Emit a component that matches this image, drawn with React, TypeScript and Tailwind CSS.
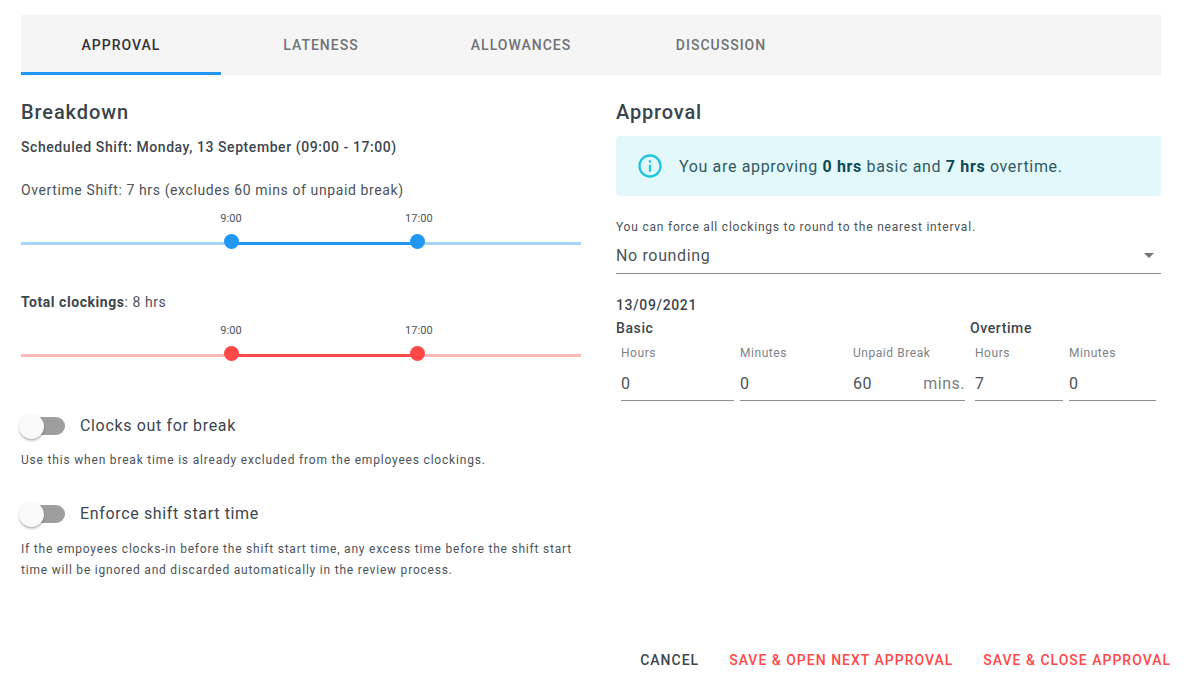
import React from "react";

function Range({ light, dark }: { light: string; dark: string }) {
  return (
    <div className="relative h-[40px] w-[560px]">
      <div className="flex h-[18px] text-[11px] leading-[18px] tracking-[0.1px] text-[#4b5359]">
        <span className="ml-[199px] w-[22px] text-center">9:00</span>
        <span className="ml-[163px] w-[26px] text-center">17:00</span>
      </div>
      <div className="mt-[14px] flex h-[3px] items-stretch">
        <div className={`w-[210px] ${light}`} />
        <div className={`w-[186px] ${dark}`} />
        <div className={`flex-1 ${light}`} />
      </div>
      <div className={`absolute left-[203px] top-[24px] h-[15px] w-[15px] rounded-full ${dark}`} />
      <div className={`absolute left-[389px] top-[24px] h-[15px] w-[15px] rounded-full ${dark}`} />
    </div>
  );
}

function Toggle({ label }: { label: string }) {
  return (
    <div className="flex h-[24px] items-center">
      <div className="relative h-[18px] w-[44px] rounded-[9px] bg-[#9e9e9e]">
        <div className="absolute left-[-2px] top-[-3px] h-[25px] w-[25px] rounded-full bg-[#fafafa] shadow-[0_2px_3px_-1px_rgba(0,0,0,0.3),0_1px_3px_rgba(0,0,0,0.12)]" />
      </div>
      <span className="ml-[15px] text-[16px] tracking-[0.65px] text-[#3d474e]">{label}</span>
    </div>
  );
}

function Field({ label, value, width, suffix, className = "" }: { label: string; value: string; width: string; suffix?: string; className?: string }) {
  return (
    <div className={`${width} ${className} flex h-[56px] flex-col`}>
      <div className="h-[19px] text-[12px] leading-[19px] tracking-[0.55px] text-[#7d8388]">{label}</div>
      <div className="mt-[9px] flex h-[29px] items-center justify-between border-b border-[#8f8f8f] pb-[4px] text-[16px] tracking-[0.5px] text-[#4b5359]">
        <span>{value}</span>
        {suffix && <span className="text-[#777d82]">{suffix}</span>}
      </div>
    </div>
  );
}

export default function App() {
  return (
    <div className="h-[688px] w-[1186px] overflow-hidden bg-white pl-[21px] pt-[15px] font-['Roboto',sans-serif] text-[#3d474e]">
      <div className="flex h-[60px] w-[1140px] bg-[#f5f5f5] text-[14px] font-medium tracking-[1px]">
        <div className="flex w-[200px] items-center justify-center border-b-[3px] border-[#2196f3] pt-[3px] text-[#2f3438]">APPROVAL</div>
        <div className="flex w-[200px] items-center justify-center text-[#6f7376]">LATENESS</div>
        <div className="flex w-[200px] items-center justify-center text-[#6f7376]">ALLOWANCES</div>
        <div className="flex w-[200px] items-center justify-center text-[#6f7376]">DISCUSSION</div>
      </div>

      <div className="flex">
        <div className="w-[560px]">
          <h2 className="mt-[22px] h-[30px] text-[20px] font-medium leading-[30px] tracking-[0.9px] text-[#3a444c]">Breakdown</h2>
          <p className="mt-[10px] h-[20px] text-[14px] font-medium leading-[20px] tracking-[0.57px]">Scheduled Shift: Monday, 13 September (09:00 - 17:00)</p>
          <p className="mt-[23px] h-[20px] text-[14px] leading-[20px] tracking-[0.61px] text-[#4b5359]">Overtime Shift: 7 hrs (excludes 60 mins of unpaid break)</p>
          <div className="mt-[10px]"><Range light="bg-[#a6d5fa]" dark="bg-[#2196f3]" /></div>
          <p className="mt-[42px] h-[20px] text-[14px] leading-[20px] tracking-[0.55px] text-[#4b5359]"><b className="font-bold text-[#3d474e]">Total clockings</b>: 8 hrs</p>
          <div className="mt-[10px]"><Range light="bg-[#ffb6b6]" dark="bg-[#ff4848]" /></div>
          <div className="mt-[52px]"><Toggle label="Clocks out for break" /></div>
          <p className="mt-[12px] h-[20px] text-[12px] leading-[20px] tracking-[0.81px] text-[#4b5359]">Use this when break time is already excluded from the employees clockings.</p>
          <div className="mt-[32px]"><Toggle label="Enforce shift start time" /></div>
          <p className="mt-[13px] text-[12px] leading-[21px] tracking-[0.79px] text-[#4b5359]">If the empoyees clocks-in before the shift start time, any excess time before the shift start<br />time will be ignored and discarded automatically in the review process.</p>
        </div>

        <div className="ml-[35px] w-[545px]">
          <h2 className="mt-[22px] h-[30px] text-[20px] font-medium leading-[30px] tracking-[0.85px] text-[#3a444c]">Approval</h2>
          <div className="mt-[9px] flex h-[60px] items-center rounded-[4px] bg-[#e3f8fb] pl-[20px] text-[16px] tracking-[0.65px] text-[#2f5a63]">
            <svg width="28" height="28" viewBox="0 0 24 24" fill="#1cc5dc" className="shrink-0">
              <path d="M11 9h2V7h-2m1 13c-4.41 0-8-3.59-8-8s3.59-8 8-8 8 3.59 8 8-3.59 8-8 8m0-18A10 10 0 0 0 2 12a10 10 0 0 0 10 10 10 10 0 0 0 10-10A10 10 0 0 0 12 2m-1 15h2v-6h-2v6z" />
            </svg>
            <span className="ml-[15px] pt-[1px]">You are approving <b className="font-bold text-[#0d4a55]">0 hrs</b> basic and <b className="font-bold text-[#0d4a55]">7 hrs</b> overtime.</span>
          </div>
          <p className="mt-[21px] h-[20px] text-[12px] leading-[20px] tracking-[0.79px] text-[#4b5359]">You can force all clockings to round to the nearest interval.</p>
          <div className="mt-[6px] flex h-[31px] items-center justify-between border-b border-[#8f8f8f] pb-[4px] text-[16px] tracking-[0.65px] text-[#4b5359]">
            <span>No rounding</span>
            <svg width="24" height="24" viewBox="0 0 24 24" fill="#757575" className="mb-[3px] shrink-0"><path d="M7 10l5 5 5-5z" /></svg>
          </div>
          <p className="mt-[21px] h-[20px] text-[14px] font-medium leading-[20px] tracking-[0.65px]">13/09/2021</p>
          <div className="mt-[3px] flex h-[20px] text-[14px] font-medium leading-[20px] tracking-[0.6px]">
            <span className="w-[354px]">Basic</span>
            <span>Overtime</span>
          </div>
          <div className="mt-[6px] flex pl-[5px]">
            <Field label="Hours" value="0" width="w-[113px]" />
            <Field label="Minutes" value="0" width="w-[113px]" className="ml-[6px]" />
            <Field label="Unpaid Break" value="60" width="w-[112px]" suffix="mins." />
            <Field label="Hours" value="7" width="w-[88px]" className="ml-[10px]" />
            <Field label="Minutes" value="0" width="w-[87px]" className="ml-[6px]" />
          </div>
        </div>
      </div>

      <div className="mt-[69px] flex w-[1150px] justify-end text-[14px] font-medium tracking-[1px]">
        <span className="text-[#3d474e]">CANCEL</span>
        <span className="ml-[30px] text-[#ff4848]">SAVE &amp; OPEN NEXT APPROVAL</span>
        <span className="ml-[30px] text-[#ff4848]">SAVE &amp; CLOSE APPROVAL</span>
      </div>
    </div>
  );
}
